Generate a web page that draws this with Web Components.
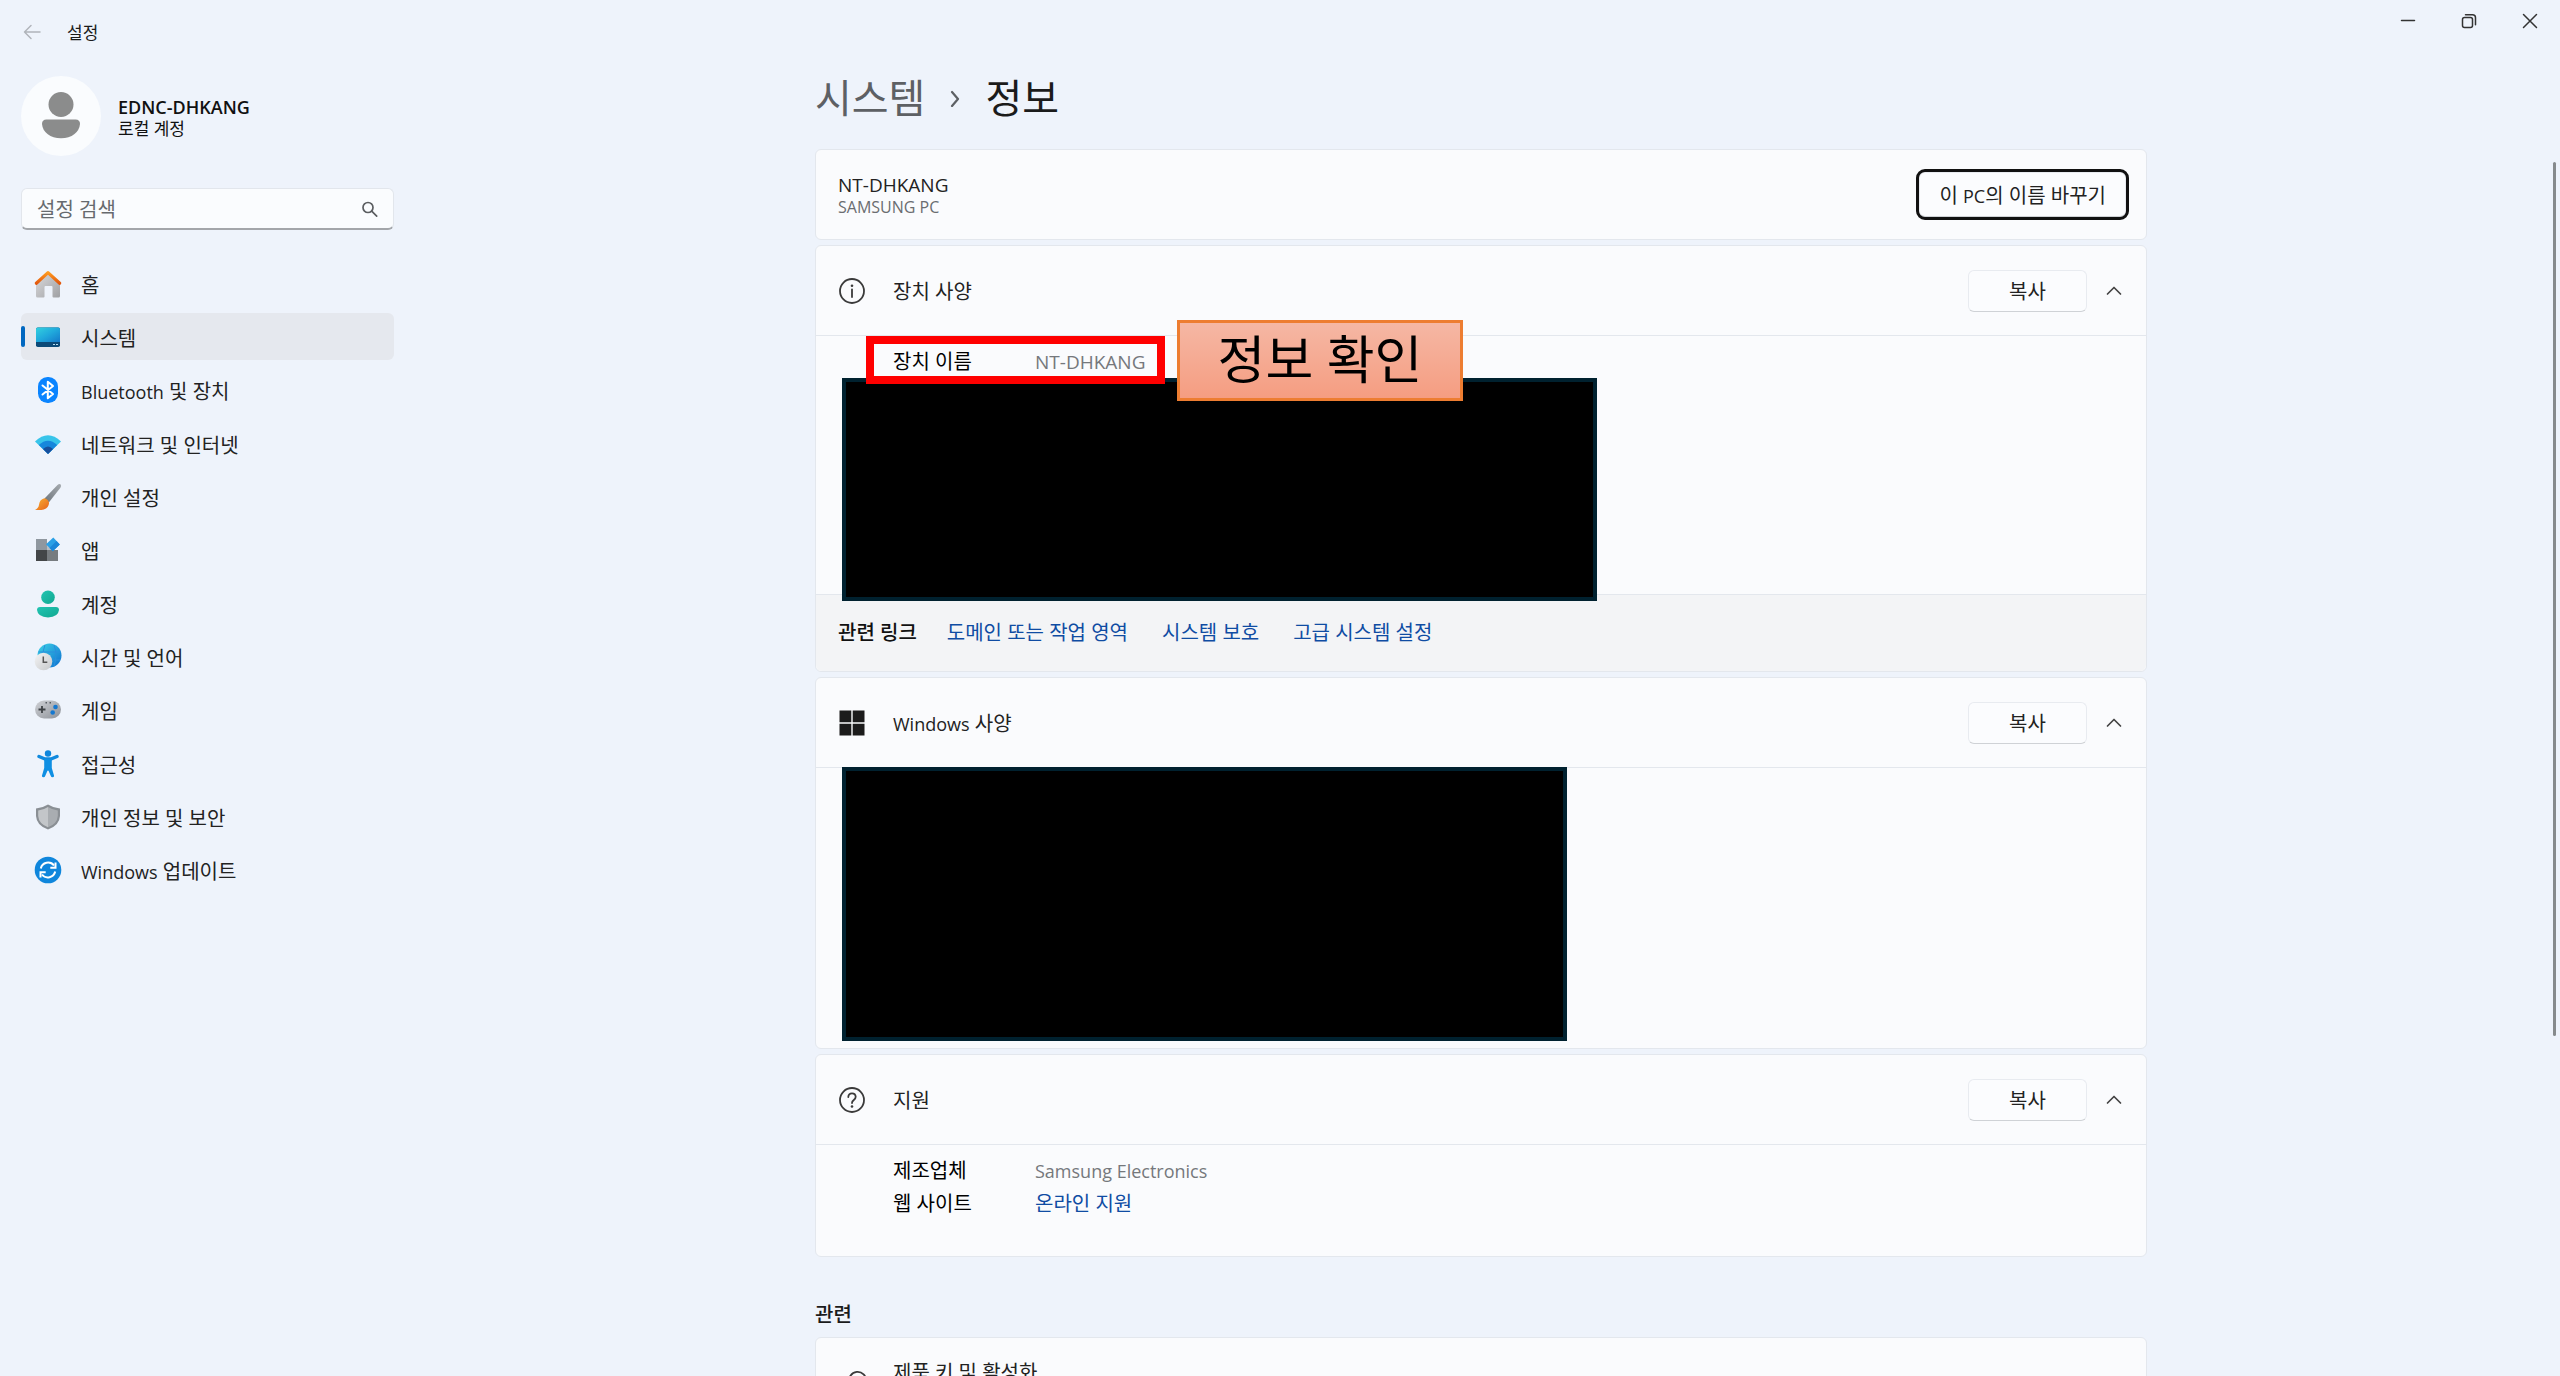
<!DOCTYPE html>
<html lang="ko">
<head>
<meta charset="utf-8">
<title>설정</title>
<style>
	html, body { margin: 0; height: 100%; }
	body {
		overflow: hidden;
		background: #eef3fb;
		color: #1b1b1b;
		font: 20px/28px "Open Sans", "Noto Sans CJK KR", sans-serif;
	}
</style>
</head>
<body>
<settings-window></settings-window>

<script>
const ICONS = {
	home: `<defs><linearGradient id="a" x1="0" y1="0" x2="1" y2="1"><stop stop-color="#dcdcde"/><stop offset="1" stop-color="#9fa0a3"/></linearGradient>
		<linearGradient id="b" x1="0" y1="0" x2="0" y2="1"><stop stop-color="#ff9a1f"/><stop offset="1" stop-color="#e2580e"/></linearGradient></defs>
		<path d="M2 12 14 2l12 10v14q0 1.500-1.500 1.500h-5q-1 0-1-1V17q0-1-1-1h-6q-1 0-1 1v9.500q0 1-1 1H3.500Q2 27.500 2 26z" fill="url(#a)"/>
		<path d="M2.300 13.200 14 2.600l11.700 10.600" fill="none" stroke="url(#b)" stroke-width="3.200" stroke-linecap="round" stroke-linejoin="round"/>`,
	system: `<defs><linearGradient id="a" x1="0" y1="0" x2="1" y2="1"><stop stop-color="#33d1df"/><stop offset=".5" stop-color="#20a9dc"/><stop offset="1" stop-color="#1479ca"/></linearGradient></defs>
		<rect x="2" y="4.500" width="24" height="19.500" rx="1.800" fill="#0c4a78"/>
		<path d="M2 6.300q0-1.800 1.800-1.800h20.400q1.800 0 1.800 1.800V19H2z" fill="url(#a)"/>
		<path d="M19 21.500h2m1 0h2" stroke="#b6dcf0" stroke-width="1.200"/>`,
	bluetooth: `<rect x="4" y="1" width="20" height="26" rx="9.500" fill="#0a84ff"/>
		<path d="M8.500 9.500 19 18l-5.200 4.300V5.700L19 10 8.500 18.500" fill="none" stroke="#fff" stroke-width="2" stroke-linejoin="round" stroke-linecap="round"/>`,
	wifi: `<path d="M1 11.500Q14-1 27 11.500L14 24z" fill="#38c4ea"/>
		<path d="M4.800 15Q14 6.500 23.200 15L14 24z" fill="#1787dc"/>
		<path d="M9 19Q14 14 19 19l-5 5z" fill="#174f9c"/>`,
	brush: `<defs><linearGradient id="a" x1="1" y1="0" x2="0" y2="1"><stop stop-color="#a6abb0"/><stop offset="1" stop-color="#6e757c"/></linearGradient>
		<linearGradient id="b" x1="0" y1="0" x2="1" y2="1"><stop stop-color="#f9b233"/><stop offset="1" stop-color="#e6621c"/></linearGradient></defs>
		<path d="M10.500 15.500 23.500 2q2-1.800 3.200-.5 1 1.200-.3 3.300L14.800 19.500z" fill="url(#a)"/>
		<path d="M10.300 15.300q3.700.7 4.800 4.400-.3 5-5.300 6.800-4.500 1-8.800.2 3.500-1.500 4-5 .5-5 5.300-6.400z" fill="url(#b)"/>`,
	apps: `<rect x="2" y="3" width="11" height="11" fill="#8f979f"/><rect x="2" y="14" width="11" height="11" fill="#434648"/>
		<rect x="13" y="14" width="11" height="11" fill="#777c80"/><path d="M13 8v6h6z" fill="#b9bec4"/>
		<path d="M19.300 1.500 25.800 8.500 18.800 15.300 12 8.300z" fill="#2aa0e6"/>
		<path d="M25.800 8.500 18.800 15.300 15.500 12 22.500 5z" fill="#1b86d8"/>`,
	account: `<defs><linearGradient id="a" x1="0" y1="0" x2="1" y2="1"><stop stop-color="#22c4b2"/><stop offset="1" stop-color="#10a890"/></linearGradient></defs>
		<circle cx="14" cy="7.300" r="6.800" fill="url(#a)"/>
		<path d="M6 17h16q3 0 3 3-.7 7-11 7.500Q3.700 27 3 20q0-3 3-3z" fill="url(#a)"/>`,
	time: `<defs><linearGradient id="a" x1="0" y1="0" x2="1" y2="1"><stop stop-color="#3fd3e6"/><stop offset="1" stop-color="#0c6fd0"/></linearGradient>
		<linearGradient id="b" x1="0" y1="0" x2="1" y2="1"><stop stop-color="#f4f4f5"/><stop offset="1" stop-color="#c6c8ca"/></linearGradient></defs>
		<circle cx="15.500" cy="12.500" r="12" fill="url(#a)"/>
		<path d="M4.500 9h22M5 17h21M11 2q-4 10 0 21M20 2q4 10 0 21" fill="none" stroke="#2a8fdc" stroke-width="1"/>
		<circle cx="9.500" cy="18.500" r="8.800" fill="url(#b)"/>
		<path d="M9.300 13.500v5.700h4" fill="none" stroke="#555" stroke-width="1.500"/>`,
	game: `<defs><linearGradient id="a" x1="0" y1="0" x2="1" y2="1"><stop stop-color="#cfd1d6"/><stop offset="1" stop-color="#8e9299"/></linearGradient></defs>
		<rect x="1" y="4.500" width="26" height="18" rx="9" fill="url(#a)"/>
		<path d="M8 10v7M4.500 13.500h7" stroke="#3e4246" stroke-width="1.800"/>
		<path d="M11.500 6.700h1.500m2.500 0H17" stroke="#555a60" stroke-width="1.500"/>
		<circle cx="21.500" cy="11" r="2.300" fill="#1578d0"/><circle cx="18.700" cy="16.500" r="2.300" fill="#1578d0"/>`,
	access: `<circle cx="14" cy="3.500" r="3.200" fill="#0f86dc"/>
		<path d="M5 6.500 11 9h6l6-2.500M14 10v9" fill="none" stroke="#1089de" stroke-width="3.400" stroke-linecap="round" stroke-linejoin="round"/>
		<path d="M10.200 9h7.600v9l2.200 7.500q.3 1.800-1.500 1.800-1.300 0-1.800-1.500L14 19.500l-2.700 6.300q-.5 1.500-1.800 1.500-1.800 0-1.500-1.800l2.200-7.500z" fill="#0f8fe3"/>`,
	shield: `<path d="M14 1.500q5.500 3.500 12 4V13q-.5 9.500-12 13.500Q2.500 22.500 2 13V5.500q6.500-.5 12-4z" fill="#8a8f94"/>
		<path d="M14 4q4.500 3 9.800 3.500V13q-.5 7.700-9.800 11.200z" fill="#a9adb1"/>
		<path d="M14 4Q9.500 7 4.200 7.500V13q.5 7.700 9.800 11.200z" fill="#c3c6c9"/>`,
	update: `<circle cx="14" cy="14" r="13.300" fill="#0f86dc"/>
		<path d="M6.800 12.500a7.500 7.500 0 0 1 13.200-3M21.200 15.500a7.500 7.500 0 0 1-13.200 3" fill="none" stroke="#fff" stroke-width="2"/>
		<path d="M21.500 6.500v5.200h-5.200M6.500 21.500v-5.200h5.200" fill="none" stroke="#fff" stroke-width="2"/>`,
	info: `<circle cx="14" cy="14" r="12" fill="none" stroke="#3a3a3a" stroke-width="1.800"/>
		<path d="M14 12.500v7.500" stroke="#3a3a3a" stroke-width="1.800" stroke-linecap="round"/><circle cx="14" cy="8.700" r="1.300" fill="#3a3a3a"/>`,
	windows: `<path d="M1.500 1.500h11.800v11.800H1.500zM14.700 1.500h11.800v11.800H14.700zM1.500 14.700h11.800v11.800H1.500zM14.700 14.700h11.800v11.800H14.700z" fill="#1b1b1b"/>`,
	help: `<circle cx="14" cy="14" r="12" fill="none" stroke="#3a3a3a" stroke-width="1.800"/>
		<path d="M10.300 11q.2-3.700 3.700-3.700t3.700 3.500q0 1.700-1.900 3.200T14 17" fill="none" stroke="#3a3a3a" stroke-width="1.800" stroke-linecap="round"/><circle cx="14" cy="20.500" r="1.300" fill="#3a3a3a"/>`,
	key: `<path d="M11.500 14A8.500 8.500 0 1 1 17 19.500l-2.500 2.500H12v2.500H9.500V27H3v-5z" fill="none" stroke="#3a3a3a" stroke-width="1.800" stroke-linejoin="round"/>
		<circle cx="21" cy="9" r="1.500" fill="#3a3a3a"/>`,
};

class FluentIcon extends HTMLElement {
	constructor() {
		super();
		this.attachShadow({ mode: "open" });
	}

	connectedCallback() {
		this.shadowRoot.innerHTML = `
			<style>
				:host { display: block; flex: none; width: 28px; height: 28px; }
				svg { display: block; }
			</style>
			<svg width="28" height="28" viewBox="0 0 28 28" aria-hidden="true">${ICONS[this.getAttribute("name")]}</svg>
		`;
	}
}
customElements.define("fluent-icon", FluentIcon);

class TitleBar extends HTMLElement {
	constructor() {
		super();
		this.attachShadow({ mode: "open" }).innerHTML = `
			<style>
				:host { display: flex; align-items: center; height: 64px; font-size: 17px; }
				button { display: grid; place-items: center; padding: 0; border: 0; background: none; }
				.back { width: 32px; height: 32px; margin: 0 19px 0 16px; }
				.title { flex: 1; padding-top: 2px; }
				.caption { display: flex; align-self: flex-start; }
				.caption button { width: 61px; height: 42px; }
				svg { fill: none; stroke: #333; stroke-width: 1.500; stroke-linecap: round; stroke-linejoin: round; }
				.back svg { stroke: #b0b4ba; }
			</style>
			<button class="back" aria-label="뒤로" disabled>
				<svg width="18" height="16" viewBox="0 0 18 16"><path d="M17 8H1.500M8 1.500 1.500 8 8 14.500"/></svg>
			</button>
			<span class="title"><slot></slot></span>
			<div class="caption">
				<button aria-label="최소화"><svg width="16" height="16" viewBox="0 0 16 16"><path d="M1.500 7.500h13"/></svg></button>
				<button aria-label="이전 크기로 복원"><svg width="16" height="16" viewBox="0 0 16 16"><rect x="1.500" y="4.500" width="10" height="10" rx="2"/><path d="M4.500 1.700h7q3 0 3 3v7"/></svg></button>
				<button aria-label="닫기"><svg width="16" height="16" viewBox="0 0 16 16"><path d="m1.500 1.500 13 13m0-13-13 13"/></svg></button>
			</div>
		`;
	}
}
customElements.define("title-bar", TitleBar);

class UserProfile extends HTMLElement {
	constructor() {
		super();
		this.attachShadow({ mode: "open" }).innerHTML = `
			<style>
				:host { display: flex; align-items: center; gap: 17px; }
				svg { flex: none; }
				.text { display: flex; flex-direction: column; padding-top: 4px; line-height: 22px; color: #111; }
				.name { font-size: 18px; font-weight: 600; }
				.kind { font-size: 17px; }
			</style>
			<svg width="80" height="80" viewBox="0 0 80 80" aria-hidden="true">
				<circle cx="40" cy="40" r="40" fill="#fafcfe"/>
				<circle cx="40" cy="28.500" r="12.500" fill="#8b8c8c"/>
				<path d="M25.500 43.500h29q4.500 0 4.500 4.500-.5 6-5.500 10-5.500 4.300-13.500 4.300T26.500 58Q21.500 54 21 48q0-4.500 4.500-4.500z" fill="#8b8c8c"/>
			</svg>
			<div class="text">
				<span class="name"><slot name="name"></slot></span>
				<span class="kind"><slot></slot></span>
			</div>
		`;
	}
}
customElements.define("user-profile", UserProfile);

class SearchBox extends HTMLElement {
	constructor() {
		super();
		this.attachShadow({ mode: "open" }).innerHTML = `
			<style>
				:host { display: block; }
				label {
					display: flex;
					align-items: center;
					box-sizing: border-box;
					height: 42px;
					padding: 0 15px;
					border: 1px solid #e2e6ec;
					border-bottom: 2px solid #a3a6aa;
					border-radius: 6px;
					background: #fafcfe;
				}
				input {
					flex: 1;
					min-width: 0;
					padding: 2px 0 0;
					border: 0;
					outline: 0;
					background: none;
					color: inherit;
					font: inherit;
				}
				input::placeholder { color: #666a6e; opacity: 1; }
			</style>
			<label>
				<input type="search" placeholder="설정 검색" aria-label="설정 검색">
				<svg width="18" height="18" viewBox="0 0 18 18" fill="none" stroke="#5a5d60" stroke-width="1.700" stroke-linecap="round"><circle cx="8" cy="7.500" r="5"/><path d="m11.700 11.200 5 5"/></svg>
			</label>
		`;
	}
}
customElements.define("search-box", SearchBox);

class NavItem extends HTMLElement {
	constructor() {
		super();
		this.attachShadow({ mode: "open" });
	}

	connectedCallback() {
		this.shadowRoot.innerHTML = `
			<style>
				:host { display: block; }
				a {
					position: relative;
					display: flex;
					align-items: center;
					gap: 19px;
					height: 47px;
					padding: 0 13px;
					border-radius: 6px;
					color: #222;
					text-decoration: none;
				}
				span { padding-top: 4px; }
				:host([selected]) a { background: #e5e8ee; }
				:host([selected]) a::before {
					content: "";
					position: absolute;
					left: 0;
					width: 4px;
					height: 21px;
					border-radius: 2px;
					background: #0067c0;
				}
			</style>
			<a href="#"><fluent-icon name="${this.getAttribute("icon")}"></fluent-icon><span><slot></slot></span></a>
		`;
	}
}
customElements.define("nav-item", NavItem);

class PushButton extends HTMLElement {
	constructor() {
		super();
		this.attachShadow({ mode: "open" }).innerHTML = `
			<style>
				:host { display: block; }
				button {
					min-width: 119px;
					height: 42px;
					padding: 3px 19px 0;
					border: 1px solid #e8ebf0;
					border-bottom-color: #cfd2d6;
					border-radius: 6px;
					background: #fbfcfe;
					color: #222;
					font: inherit;
				}
				:host([focused]) button {
					height: 45px;
					margin: 3px;
					outline: 3px solid #111;
				}
			</style>
			<button><slot></slot></button>
		`;
	}
}
customElements.define("push-button", PushButton);

// card with a header row, an optional body and an optional footer
class SettingsCard extends HTMLElement {
	constructor() {
		super();
		this.attachShadow({ mode: "open" });
	}

	connectedCallback() {
		const icon = this.getAttribute("icon");
		const open = this.hasAttribute("expanded");
		this.shadowRoot.innerHTML = `
			<style>
				:host {
					display: block;
					border: 1px solid #e3e7ed;
					border-radius: 6px;
					background: #fafbfd;
				}
				header {
					display: flex;
					align-items: center;
					height: 89px;
					padding: 0 17px 0 22px;
				}
				fluent-icon { margin-right: 27px; }
				.title { flex: 1; padding-top: 3px; color: #222; }
				.toggle {
					display: grid;
					place-items: center;
					width: 30px;
					height: 30px;
					margin-left: 12px;
					padding: 0;
					border: 0;
					background: none;
				}
				.body { position: relative; border-top: 1px solid #e3e7ed; }
			</style>
			<header>
				${icon ? `<fluent-icon name="${icon}"></fluent-icon>` : ""}
				<div class="title"><slot name="title"></slot></div>
				<slot name="action"></slot>
				${open ? `<button class="toggle" aria-label="접기" aria-expanded="true"><svg width="16" height="10" viewBox="0 0 16 10" fill="none" stroke="#444" stroke-width="1.700" stroke-linecap="round" stroke-linejoin="round"><path d="M1.500 8 8 1.500 14.500 8"/></svg></button>` : ""}
			</header>
			${open ? `<div class="body"><slot></slot></div>` : ""}
			<slot name="footer"></slot>
		`;
	}
}
customElements.define("settings-card", SettingsCard);

class SpecRow extends HTMLElement {
	constructor() {
		super();
		this.attachShadow({ mode: "open" }).innerHTML = `
			<style>
				:host { display: block; }
				dl {
					display: grid;
					grid-template-columns: 142px 1fr;
					align-items: center;
					height: 33px;
					margin: 0;
					padding-left: 77px;
				}
				dt { color: #000; }
				dd { margin: 0; color: #75787c; }
			</style>
			<dl><dt><slot name="label"></slot></dt><dd><slot></slot></dd></dl>
		`;
	}
}
customElements.define("spec-row", SpecRow);

class RelatedLinks extends HTMLElement {
	constructor() {
		super();
		this.attachShadow({ mode: "open" }).innerHTML = `
			<style>
				:host {
					display: flex;
					align-items: center;
					gap: 34px;
					height: 76px;
					padding: 0 22px;
					border-top: 1px solid #e3e7ed;
					border-radius: 0 0 6px 6px;
					background: #f3f4f6;
				}
				b { margin-right: -4px; font-weight: 500; color: #111; }
			</style>
			<b>관련 링크</b>
			<slot></slot>
		`;
	}
}
customElements.define("related-links", RelatedLinks);

class CalloutNote extends HTMLElement {
	constructor() {
		super();
		this.attachShadow({ mode: "open" }).innerHTML = `
			<style>
				:host {
					display: grid;
					place-items: center;
					box-sizing: border-box;
					width: 286px;
					height: 81px;
					padding-bottom: 4px;
					border: 3px solid #ed7d31;
					background: linear-gradient(#f5b7a4, #f59d81);
					color: #000;
					font-size: 52px;
					line-height: 70px;
				}
			</style>
			<span><slot></slot></span>
		`;
	}
}
customElements.define("callout-note", CalloutNote);

class SettingsWindow extends HTMLElement {
	constructor() {
		super();
		this.attachShadow({ mode: "open" }).innerHTML = `
			<style>
				:host { display: grid; grid-template-rows: auto 1fr; height: 100vh; overflow: hidden; }
				[lang="en"] { font-size: 18px; }
				.host-name { font-size: 19px; }
				.columns { display: grid; grid-template-columns: 402px 1fr; min-height: 0; }
				aside { padding: 12px 8px 0 21px; }
				search-box { margin: 32px 0 30px; }
				nav { display: flex; flex-direction: column; justify-content: space-between; height: 634px; }
				main { position: relative; overflow: hidden; }
				.page { max-width: 1332px; margin: 0 auto; }
				h1 {
					display: flex;
					align-items: center;
					gap: 24px;
					margin: 0 0 17px;
					font-size: 40px;
					font-weight: 400;
					line-height: 68px;
				}
				h1 a { color: #5d6064; text-decoration: none; }
				h2 { margin: 44px 0 8px; font-size: 20px; font-weight: 500; line-height: 28px; }
				.cards { display: flex; flex-direction: column; gap: 5px; }
				.pc { display: flex; flex-direction: column; line-height: 22px; }
				.pc small { font-size: 16px; color: #6a6d70; }
				.pair { display: block; padding-bottom: 23px; }
				.link { color: #0f4ca3; text-decoration: none; }
				.device { height: 258px; padding-top: 9px; box-sizing: border-box; }
				.windows { height: 280px; }
				.support { padding: 9px 0 36px; }
				.mask, .frame, callout-note { position: absolute; box-sizing: border-box; }
				.mask { left: 26px; border: 4px solid #00212f; background: #000; }
				.device .mask { top: 42px; width: 755px; height: 223px; }
				.windows .mask { top: -1px; width: 725px; height: 274px; }
				.frame { left: 50px; top: 0; width: 299px; height: 48px; border: 8px solid #f00; }
				callout-note { left: 361px; top: -16px; }
				.scroll { position: absolute; right: 4px; top: 98px; bottom: 340px; width: 3px; border-radius: 2px; background: #868a8c; }
			</style>
			<title-bar>설정</title-bar>
			<div class="columns">
				<aside>
					<user-profile><span slot="name">EDNC-DHKANG</span>로컬 계정</user-profile>
					<search-box></search-box>
					<nav>
						<nav-item icon="home">홈</nav-item>
						<nav-item icon="system" selected>시스템</nav-item>
						<nav-item icon="bluetooth"><span lang="en">Bluetooth</span> 및 장치</nav-item>
						<nav-item icon="wifi">네트워크 및 인터넷</nav-item>
						<nav-item icon="brush">개인 설정</nav-item>
						<nav-item icon="apps">앱</nav-item>
						<nav-item icon="account">계정</nav-item>
						<nav-item icon="time">시간 및 언어</nav-item>
						<nav-item icon="game">게임</nav-item>
						<nav-item icon="access">접근성</nav-item>
						<nav-item icon="shield">개인 정보 및 보안</nav-item>
						<nav-item icon="update"><span lang="en">Windows</span> 업데이트</nav-item>
					</nav>
				</aside>
				<main>
					<div class="page">
						<h1>
							<a href="#">시스템</a>
							<svg width="12" height="18" viewBox="0 0 12 18" fill="none" stroke="#5d6064" stroke-width="2.200" stroke-linecap="round" stroke-linejoin="round"><path d="m3 3 6 7-6 7"/></svg>
							<span>정보</span>
						</h1>
						<div class="cards">
							<settings-card>
								<div class="pc" slot="title"><span class="host-name">NT-DHKANG</span><small>SAMSUNG PC</small></div>
								<push-button slot="action" focused>이 <span lang="en">PC</span>의 이름 바꾸기</push-button>
							</settings-card>
							<settings-card icon="info" expanded>
								<span slot="title">장치 사양</span>
								<push-button slot="action">복사</push-button>
								<div class="device">
									<spec-row><span slot="label">장치 이름</span><span class="host-name">NT-DHKANG</span></spec-row>
									<div class="mask"></div>
									<div class="frame"></div>
									<callout-note>정보 확인</callout-note>
								</div>
								<related-links slot="footer">
									<a class="link" href="#">도메인 또는 작업 영역</a>
									<a class="link" href="#">시스템 보호</a>
									<a class="link" href="#">고급 시스템 설정</a>
								</related-links>
							</settings-card>
							<settings-card icon="windows" expanded>
								<span slot="title"><span lang="en">Windows</span> 사양</span>
								<push-button slot="action">복사</push-button>
								<div class="windows"><div class="mask"></div></div>
							</settings-card>
							<settings-card icon="help" expanded>
								<span slot="title">지원</span>
								<push-button slot="action">복사</push-button>
								<div class="support">
									<spec-row><span slot="label">제조업체</span><span lang="en">Samsung Electronics</span></spec-row>
									<spec-row><span slot="label">웹 사이트</span><a class="link" href="#">온라인 지원</a></spec-row>
								</div>
							</settings-card>
						</div>
						<h2>관련</h2>
						<settings-card icon="key">
							<span class="pair" slot="title">제품 키 및 활성화</span>
						</settings-card>
					</div>
					<div class="scroll"></div>
				</main>
			</div>
		`;
	}
}
customElements.define("settings-window", SettingsWindow);
</script>
</body>
</html>
